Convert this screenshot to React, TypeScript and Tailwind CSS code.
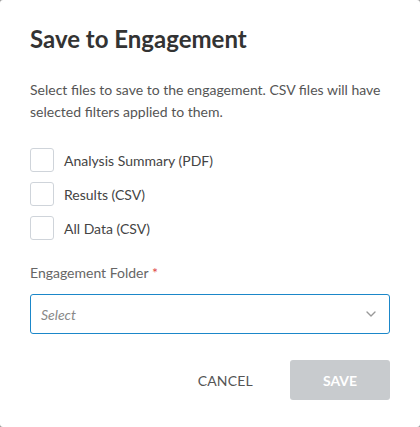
import { ChevronDown } from "lucide-react";

const files = ["Analysis Summary (PDF)", "Results (CSV)", "All Data (CSV)"];

export default function App() {
  return (
    <div className="w-[420px] h-[427px] bg-[#9a9a9a]" style={{ fontFamily: "Lato, 'Open Sans', sans-serif" }}>
      <div className="w-full h-full bg-white rounded-[3px] px-[30px] pt-[23px]">
        <h1 className="text-[24px] leading-[32px] font-bold text-[#333]">Save to Engagement</h1>

        <p className="mt-[24px] text-[14px] leading-[22px] text-[#555]">
          Select files to save to the engagement. CSV files will have selected filters applied to them.
        </p>

        <div className="mt-[25px] flex flex-col gap-[10px]">
          {files.map((f) => (
            <label key={f} className="h-[24px] flex items-center gap-[10px] text-[14px] text-[#444]">
              <span className="w-[24px] h-[24px] rounded-[3px] border border-[#cfd4da] bg-white" />
              {f}
            </label>
          ))}
        </div>

        <div className="mt-[24px] text-[14px] leading-[18px] text-[#666]">
          Engagement Folder <span className="text-[#e04848]">*</span>
        </div>

        <div className="mt-[12px] h-[40px] rounded-[3px] border border-[#1b87c9] flex items-center justify-between pl-[10px] pr-[10px]">
          <span className="italic text-[14px] text-[#888]">Select</span>
          <ChevronDown className="w-[16px] h-[16px] text-[#999]" strokeWidth={2} />
        </div>

        <div className="mt-[26px] flex items-center justify-end gap-[37px]">
          <button className="text-[14px] text-[#555] tracking-[0.2px]">CANCEL</button>
          <button className="w-[100px] h-[40px] rounded-[3px] bg-[#c8cbce] text-white font-bold text-[14px]">
            SAVE
          </button>
        </div>
      </div>
    </div>
  );
}
